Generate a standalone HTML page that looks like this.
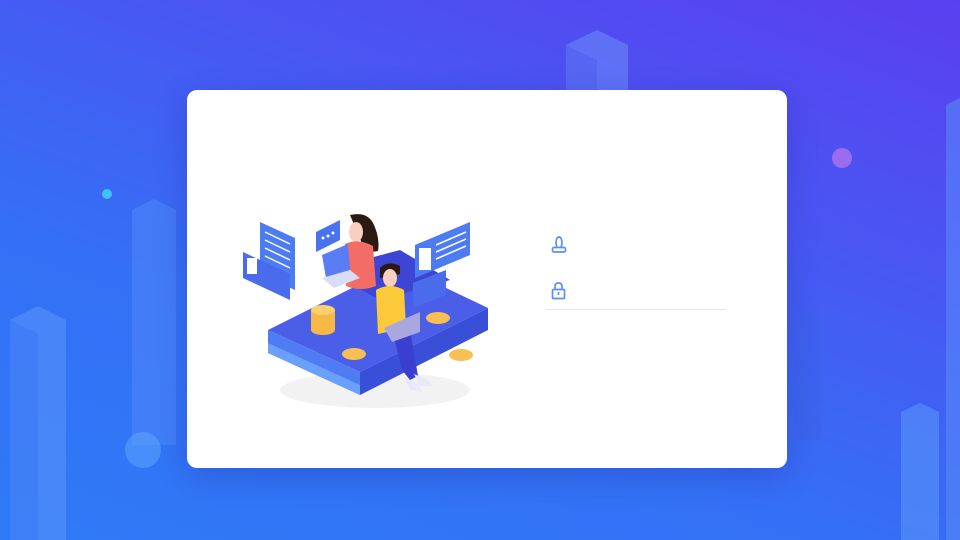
<!DOCTYPE html>
<html><head><meta charset="utf-8"><style>
html,body{margin:0;padding:0}
body{width:960px;height:540px;overflow:hidden;position:relative;font-family:"Liberation Sans",sans-serif;
background:linear-gradient(200deg,#5a3ff0 0%,#4a55f2 30%,#3470f5 65%,#2f7af7 100%);}
.card{position:absolute;left:187px;top:90px;width:600px;height:378px;background:#fff;border-radius:10px;box-shadow:0 8px 30px rgba(30,40,160,.3)}
svg{position:absolute;left:0;top:0}
</style></head><body>
<svg width="960" height="540">
 <g opacity=".55">
  <polygon points="566,45 597,30 628,45 628,100 566,100" fill="#6d8dfa"/>
  <polygon points="566,45 597,60 597,100 566,100" fill="#5f79f4"/>
  <polygon points="132,210 154,199 176,210 176,445 132,445" fill="#4f86f8"/>
  <polygon points="10,320 38,306 66,320 66,540 10,540" fill="#5a95fa"/>
  <polygon points="10,320 38,334 38,540 10,540" fill="#4c86f7"/>
  <polygon points="795,320 808,313 821,320 821,440 795,440" fill="#3d62ea"/>
  <polygon points="901,412 920,403 939,412 939,540 901,540" fill="#5a98fa"/>
  <polygon points="946,105 960,98 960,540 946,540" fill="#5a8cf8"/>
 </g>
 <circle cx="143" cy="450" r="18" fill="#5aa0fb" opacity=".6"/>
 <circle cx="107" cy="194" r="5" fill="#3dc3f7"/>
 <circle cx="842" cy="158" r="10" fill="#9a6cf0"/>
</svg>
<div class="card"></div>
<svg width="960" height="540">
 <ellipse cx="375" cy="390" rx="95" ry="18" fill="#000" opacity=".05"/>
 <polygon points="268,330 398,265 488,308 360,372" fill="#4a5ee8"/>
 <polygon points="268,330 360,372 360,395 268,353" fill="#4f7cf3"/>
 <polygon points="360,372 488,308 488,330 360,395" fill="#3a4fd8"/>
 <polygon points="268,343 360,385 360,395 268,353" fill="#6aa0fb"/>
 <polygon points="325,270 400,250 450,280 380,300" fill="#3e44d4"/>
 <polygon points="260,222 295,238 295,290 260,274" fill="#4d7cf2"/>
 <g stroke="#fff" stroke-width="1.5"><line x1="265" y1="232" x2="290" y2="244"/><line x1="265" y1="240" x2="290" y2="252"/><line x1="265" y1="248" x2="290" y2="260"/><line x1="265" y1="256" x2="290" y2="268"/></g>
 <polygon points="243,252 290,274 290,300 243,278" fill="#4a6cec"/>
 <rect x="247" y="258" width="10" height="16" fill="#fff"/>
 <polygon points="415,245 470,222 470,255 415,278" fill="#4d7cf2"/>
 <rect x="419" y="248" width="12" height="22" fill="#fff"/>
 <g stroke="#fff" stroke-width="1.5"><line x1="436" y1="245" x2="466" y2="232"/><line x1="436" y1="252" x2="466" y2="239"/><line x1="436" y1="259" x2="466" y2="246"/></g>
 <polygon points="413,283 446,270 446,295 413,308" fill="#4a6cec"/>
 <polygon points="316,232 340,220 340,240 316,252" fill="#4a72ef"/>
 <g fill="#fff"><circle cx="323" cy="238" r="1.5"/><circle cx="328" cy="236" r="1.5"/><circle cx="333" cy="233" r="1.5"/></g>
 <path d="M350 215 q18 -4 24 10 q6 14 4 26 l-12 2 z" fill="#2a1a12"/>
 <ellipse cx="356" cy="232" rx="7" ry="10" fill="#f8cfc0"/>
 <path d="M345 244 q13 -6 28 2 l3 40 q-15 6 -30 0 z" fill="#f26d66"/>
 <polygon points="322,255 348,244 350,270 326,278" fill="#5a7cf5"/>
 <polygon points="322,278 350,270 360,278 334,288" fill="#d8dcf5"/>
 <g fill="#f7b845"><rect x="311" y="310" width="24" height="20"/><ellipse cx="323" cy="330" rx="12" ry="5"/></g>
 <ellipse cx="323" cy="310" rx="12" ry="5" fill="#fcd06a"/>
 <ellipse cx="438" cy="318" rx="12" ry="6" fill="#f8c052"/>
 <ellipse cx="354" cy="354" rx="12" ry="6" fill="#f8c052"/>
 <ellipse cx="461" cy="355" rx="12" ry="6" fill="#f8c052"/>
 <path d="M380 268 q8 -8 20 -2 l0 8 l-20 4 z" fill="#2a1a12"/>
 <ellipse cx="390" cy="278" rx="7" ry="9" fill="#f8cfc0"/>
 <path d="M376 290 q14 -8 28 0 l2 38 l-28 6 z" fill="#fbc93a"/>
 <path d="M392 330 l10 40 l8 10 l8 -4 l-8 -46 z" fill="#3b3fcf"/>
 <polygon points="384,328 420,312 420,332 392,342" fill="#a9a7df"/>
 <polygon points="404,378 418,384 422,392 410,390" fill="#e7e8f8"/>
 <polygon points="414,374 428,380 432,386 420,386" fill="#e7e8f8"/>
 <g fill="none" stroke="#5b8ff9" stroke-width="1.7">
  <path d="M556 244 q0 -7 3 -7 q3 0 3 7 l-1 3 M556 244 l1 3"/>
  <rect x="552.5" y="247.5" width="13" height="4.5" rx="1.5"/>
  <rect x="552.5" y="289.5" width="12" height="9" rx="1"/>
  <path d="M555 289.5 v-3 q0 -3.5 3.5 -3.5 q3.5 0 3.5 3.5 v3"/>
  <line x1="558.5" y1="292" x2="558.5" y2="295"/>
 </g>
 <line x1="546" y1="309.5" x2="726" y2="309.5" stroke="#e6e6e6" stroke-width="1"/>
</svg>
</body></html>
